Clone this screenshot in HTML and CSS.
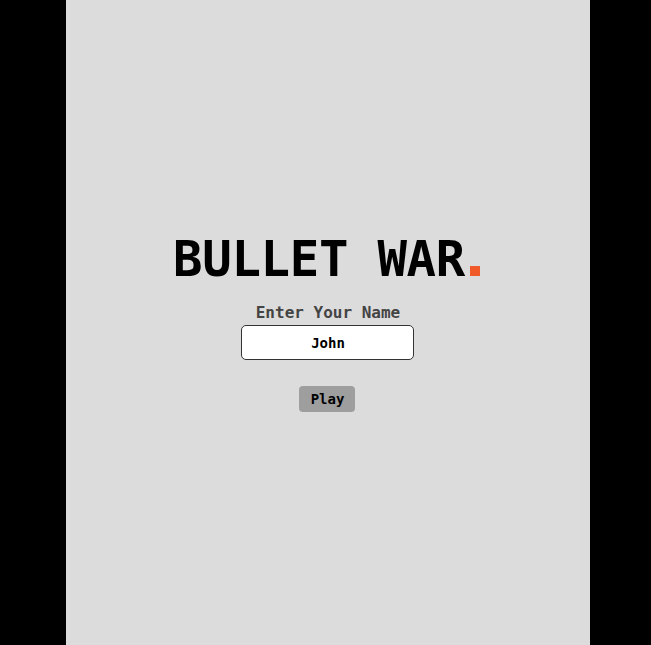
FILE: index.html
```html
<!DOCTYPE html>
<html>
<head>
<meta charset="utf-8">
<link rel="stylesheet" href="styles.css">
</head>
<body>
<div class="page">
  <div class="menu">
    <h1 class="title">BULLET WAR<span class="dot"></span></h1>
    <label class="label" for="name">Enter Your Name</label>
    <input class="name-input" id="name" type="text" value="John">
    <button class="play">Play</button>
  </div>
</div>
</body>
</html>
```
FILE: styles.css
```css
html, body {
  margin: 0;
  padding: 0;
  background: #000;
  height: 100%;
}
.page {
  box-sizing: border-box;
  width: 524px;
  height: 645px;
  margin-left: 66px;
  padding-top: 235px;
  background: #dcdcdc;
  display: flex;
  justify-content: center;
  font-family: "DejaVu Sans Mono", "Liberation Mono", monospace;
}
.menu {
  display: flex;
  flex-direction: column;
  align-items: center;
}
.title {
  margin: 0 0 0 -3px;
  font-size: 49px;
  line-height: 50px;
  height: 50px;
  font-weight: bold;
  color: #000;
  white-space: nowrap;
  letter-spacing: -0.3px;
}
.dot {
  display: inline-block;
  width: 10px;
  height: 10px;
  margin-left: 5px;
  background: #f05a28;
}
.label {
  margin-top: 18px;
  font-size: 16px;
  line-height: 20px;
  font-weight: bold;
  color: #444;
}
.name-input {
  margin-top: 2px;
  box-sizing: border-box;
  width: 173px;
  height: 35px;
  border: 1px solid #333;
  border-radius: 5px;
  background: #fff;
  text-align: center;
  font-family: inherit;
  font-size: 14px;
  font-weight: bold;
  color: #000;
  outline: none;
  padding: 0;
}
.play {
  margin: 26px 1px 0 0;
  width: 56px;
  height: 26px;
  border: none;
  border-radius: 4px;
  background: #9e9e9e;
  font-family: inherit;
  font-size: 14px;
  font-weight: bold;
  color: #000;
  padding: 0;
}
```
